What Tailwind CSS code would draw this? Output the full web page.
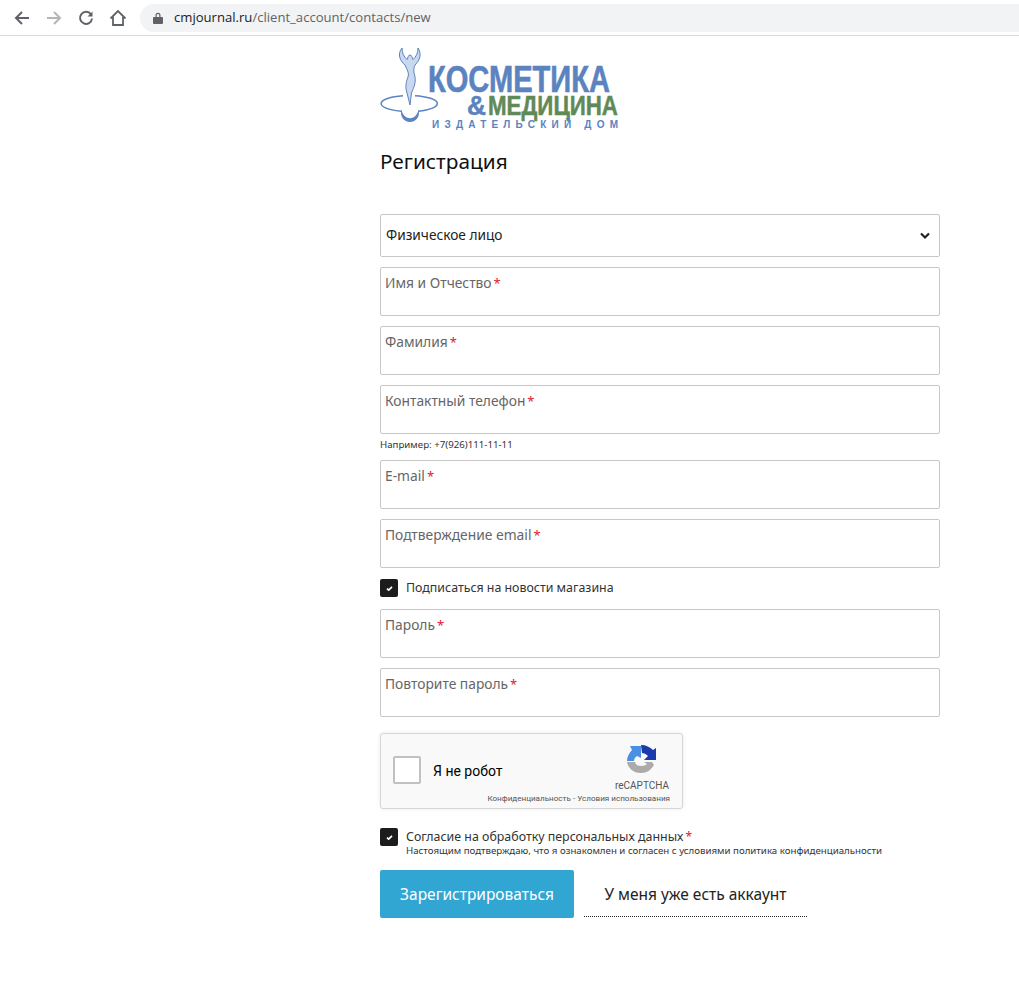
<!DOCTYPE html>
<html lang="ru">

<head>
    <meta charset="UTF-8">
    <title>Регистрация</title>
    <script src="https://cdn.jsdelivr.net/npm/@tailwindcss/browser@4"></script>
</head>

<body class="bg-white font-['Noto_Sans',sans-serif] text-[#222]">
    <!-- Browser toolbar -->
    <div class="flex items-center h-[36px] border-b border-[#dadce0] pl-[14px]">
        <svg class="w-[16px] h-[16px]" viewBox="0 0 16 16" fill="none" stroke="#5f6368" stroke-width="2"><path d="M15 8H2M8 2 2 8l6 6"/></svg>
        <svg class="w-[16px] h-[16px] ml-[16px]" viewBox="0 0 16 16" fill="none" stroke="#b4b6b9" stroke-width="2"><path d="M1 8h13M8 2l6 6-6 6"/></svg>
        <svg class="w-[16px] h-[16px] ml-[16px]" viewBox="0 0 16 16" fill="none" stroke="#5f6368" stroke-width="2"><path d="M13 4.500A6 6 0 1 0 14 8.500"/><path d="M14.500 1.500v5h-5z" fill="#5f6368" stroke="none"/></svg>
        <svg class="w-[18px] h-[18px] ml-[15px]" viewBox="0 0 18 18" fill="none" stroke="#5f6368" stroke-width="1.800"><path d="M1.500 9.500 9 2l7.500 7.500M4 8v8h10V8"/></svg>
        <div class="flex items-center flex-1 h-[28px] ml-[13px] pl-[13px] rounded-l-full bg-[#f1f3f4] text-[13.100px] font-['Open_Sans',sans-serif]">
            <svg class="w-[10px] h-[12px]" viewBox="0 0 10 12" fill="#5f6368"><path d="M1 5h8a1 1 0 0 1 1 1v5a1 1 0 0 1-1 1H1a1 1 0 0 1-1-1V6a1 1 0 0 1 1-1zM2.500 5V3.200a2.500 2.500 0 0 1 5 0V5H6.300V3.200a1.300 1.300 0 0 0-2.600 0V5z"/></svg>
            <span class="ml-[11px] text-[#202124]">cmjournal.ru<span class="text-[#5f6368]">/client_account/contacts/new</span></span>
        </div>
    </div>

    <!-- Main Content -->
    <div class="ml-[380px] w-[560px]">
        <!-- Logo -->
        <svg class="block mt-[9px] w-[240px] h-[85px] overflow-visible" viewBox="0 0 240 85">
            <path d="M23 50.700A27.500 8 0 0 0 22 66.300" fill="none" stroke="#5a83bf" stroke-width="1.500"/>
            <path d="M35 50.700A27.500 8 0 0 1 38 66.200" fill="none" stroke="#5a83bf" stroke-width="1.500"/>
            <path d="M22 3C17 9 20 16 25 20C27 25 29 27 28.300 31C26 37 25 42 27 48L30 60L31.500 48C34 42 37 36 34 28C33.500 25 34 22 35 20C40 15 42 9 38 3C38 8 36 12 33 14.500C32 13 32 10 30 10C28 10 28 13 27 14.500C24 12 22 8 22 3Z" fill="#c9d8ec" stroke="#5a83bf" stroke-width="1"/>
            <path d="M21.500 65A9 9 0 1 0 38.500 65C36 76 24 76 21.500 65Z" fill="#5a83bf"/>
            <text x="48" y="47" font-family="Liberation Sans" font-weight="700" font-size="37" fill="#5a83bf" stroke="#5a83bf" stroke-width="0.600" textLength="182" lengthAdjust="spacingAndGlyphs">КОСМЕТИКА</text>
            <text x="87" y="70" font-family="Liberation Sans" font-weight="700" font-size="27" fill="#5a83bf" stroke="#5a83bf" stroke-width="0.500" textLength="19" lengthAdjust="spacingAndGlyphs">&amp;</text>
            <text x="108" y="70" font-family="Liberation Sans" font-weight="700" font-size="27" fill="#5f8a57" stroke="#5f8a57" stroke-width="0.500" textLength="130" lengthAdjust="spacingAndGlyphs">МЕДИЦИНА</text>
            <text x="52" y="83" font-family="Liberation Sans" font-weight="700" font-size="10" fill="#5a83bf" textLength="186">ИЗДАТЕЛЬСКИЙ ДОМ</text>
        </svg>

        <h1 class="mt-[18px] h-[34px] text-[20.800px] leading-[27px] font-normal text-[#111]">Регистрация</h1>

        <!-- Select -->
        <div class="flex items-center justify-between mt-[32px] h-[43px] px-[5px] border border-[#c8c8c8] rounded-[2px] text-[13.700px] text-[#222]">
            Физическое лицо
            <svg class="w-[10px] h-[8px] mr-[4px]" viewBox="0 0 10 8" fill="none" stroke="#222" stroke-width="2.200"><path d="M1 1.500l4 4 4-4"/></svg>
        </div>

        <div class="mt-[10px] h-[49px] pl-[4px] pt-[5px] border border-[#c8c8c8] rounded-[2px] text-[13.800px] leading-[20px] text-[#666]">Имя и Отчество<span class="ml-[2px] text-[13px] text-[#e0182d]">*</span></div>
        <div class="mt-[10px] h-[49px] pl-[4px] pt-[5px] border border-[#c8c8c8] rounded-[2px] text-[13.800px] leading-[20px] text-[#666]">Фамилия<span class="ml-[2px] text-[13px] text-[#e0182d]">*</span></div>
        <div class="mt-[10px] h-[49px] pl-[4px] pt-[5px] border border-[#c8c8c8] rounded-[2px] text-[13.800px] leading-[20px] text-[#666]">Контактный телефон<span class="ml-[2px] text-[13px] text-[#e0182d]">*</span></div>
        <div class="mt-[4px] h-[14px] text-[9.700px] leading-[14px] text-[#333]">Например: +7(926)111-11-11</div>
        <div class="mt-[8px] h-[49px] pl-[4px] pt-[5px] border border-[#c8c8c8] rounded-[2px] text-[13.800px] leading-[20px] text-[#666]">E-mail<span class="ml-[2px] text-[13px] text-[#e0182d]">*</span></div>
        <div class="mt-[10px] h-[49px] pl-[4px] pt-[5px] border border-[#c8c8c8] rounded-[2px] text-[13.800px] leading-[20px] text-[#666]">Подтверждение email<span class="ml-[2px] text-[13px] text-[#e0182d]">*</span></div>

        <div class="flex items-center gap-[8px] mt-[10px] h-[20px] text-[12.400px] text-[#333]">
            <div class="flex items-center justify-center w-[18px] h-[18px] rounded-[2px] bg-[#1c1c1c]">
                <svg class="w-[7px] h-[5px]" viewBox="0 0 8 6" fill="none" stroke="#fff" stroke-width="2"><path d="M1 3.200 3 5l4-4"/></svg>
            </div>
            Подписаться на новости магазина
        </div>

        <div class="mt-[11px] h-[49px] pl-[4px] pt-[5px] border border-[#c8c8c8] rounded-[2px] text-[13.800px] leading-[20px] text-[#666]">Пароль<span class="ml-[2px] text-[13px] text-[#e0182d]">*</span></div>
        <div class="mt-[10px] h-[49px] pl-[4px] pt-[5px] border border-[#c8c8c8] rounded-[2px] text-[13.800px] leading-[20px] text-[#666]">Повторите пароль<span class="ml-[2px] text-[13px] text-[#e0182d]">*</span></div>

        <!-- reCAPTCHA -->
        <div class="relative mt-[16px] w-[303px] h-[76px] bg-[#f9f9f9] border border-[#d6d6d6] rounded-[3px] shadow-[0_0_4px_rgba(0,0,0,0.08)] font-['Roboto',sans-serif]">
            <div class="absolute left-[12px] top-[22px] w-[28px] h-[28px] bg-white border-2 border-[#c1c1c1] rounded-[2px]"></div>
            <div class="absolute left-[52px] top-[28px] text-[14px] leading-[18px] text-black">Я не робот</div>
            <svg class="absolute left-[246px] top-[11px] w-[30px] h-[29px]" viewBox="0 0 30 29">
                <path d="M0 17H8C9 20 11 21 14 21C17 21 19 20 20 19L17 17H25L27 20C24 25 20 28 14 28C6 28 1 23 0 17Z" fill="#ababab"/>
                <path d="M0 16C0 12 2 8 5 5L3 1H14V13L10 11C8 12 7 14 7 16Z" fill="#4a90e2"/>
                <path d="M14 0C19 0 23 2 26 5L29 3V15H17L21 11C19 9 17 8 15 8Z" fill="#1c3aa9"/>
            </svg>
            <div class="absolute right-[13px] top-[46px] text-[10px] leading-[12px] text-[#555]">reCAPTCHA</div>
            <div class="absolute right-[12px] top-[59px] text-[8.100px] leading-[10px] text-[#555] whitespace-nowrap">Конфиденциальность - Условия использования</div>
        </div>

        <!-- Agreement -->
        <div class="flex gap-[8px] mt-[18px]">
            <div class="flex items-center justify-center w-[18px] h-[18px] mt-[1px] rounded-[2px] bg-[#1c1c1c]">
                <svg class="w-[7px] h-[5px]" viewBox="0 0 8 6" fill="none" stroke="#fff" stroke-width="2"><path d="M1 3.200 3 5l4-4"/></svg>
            </div>
            <div class="pt-[1px]">
                <div class="text-[12.400px] leading-[17px] text-[#333]">Согласие на обработку персональных данных<span class="ml-[2px] text-[12px] text-[#e0182d]">*</span></div>
                <div class="text-[9.700px] leading-[12px] text-[#333] whitespace-nowrap">Настоящим подтверждаю, что я ознакомлен и согласен с условиями политика конфиденциальности</div>
            </div>
        </div>

        <!-- Buttons -->
        <div class="flex gap-[10px] mt-[13px]">
            <div class="flex items-center justify-center w-[194px] h-[48px] pt-[1px] rounded-[2px] bg-[#31a6d3] text-[15.500px] text-white">Зарегистрироваться</div>
            <div class="flex items-center justify-center w-[223px] h-[47px] pt-[3px] border-b border-dotted border-[#222] text-[15.500px] text-[#222]">У меня уже есть аккаунт</div>
        </div>
    </div>
</body>

</html>
